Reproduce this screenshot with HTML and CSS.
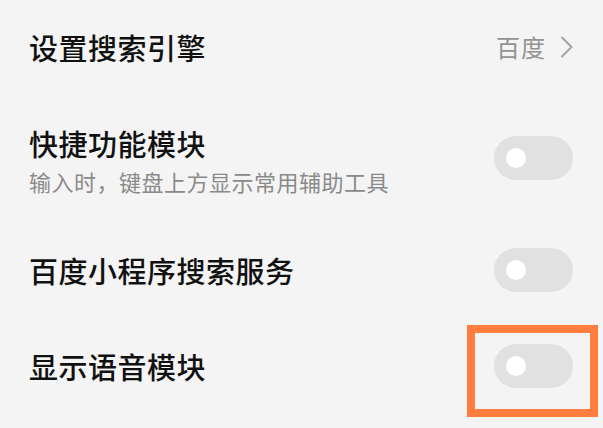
FILE: index.html
```html
<!DOCTYPE html>
<html lang="zh-CN">
<head>
<meta charset="utf-8">
<title>设置</title>
<link rel="stylesheet" href="styles.css">
</head>
<body>
<div class="page">
  <div class="row row-first">
    <div class="title">设置搜索引擎</div>
    <div class="value">
      <span class="value-text">百度</span>
      <svg class="chevron" width="14" height="22" viewBox="0 0 14 22"><path d="M2 1.5 L11.5 11 L2 20.5" fill="none" stroke="#a3a3a3" stroke-width="2" stroke-linecap="round" stroke-linejoin="round"/></svg>
    </div>
  </div>
  <div class="row row-tall">
    <div class="text">
      <div class="title">快捷功能模块</div>
      <div class="sub">输入时，键盘上方显示常用辅助工具</div>
    </div>
    <div class="toggle"><span class="knob"></span></div>
  </div>
  <div class="row">
    <div class="title">百度小程序搜索服务</div>
    <div class="toggle"><span class="knob"></span></div>
  </div>
  <div class="row row-last">
    <div class="title">显示语音模块</div>
    <div class="toggle"><span class="knob"></span></div>
    <div class="highlight"></div>
  </div>
</div>
</body>
</html>
```

FILE: styles.css
```css
html, body {
  margin: 0;
  padding: 0;
}
body {
  width: 603px;
  height: 428px;
  overflow: hidden;
  background: #f4f4f4;
  font-family: "Noto Sans CJK SC", "Noto Sans", sans-serif;
  color: #111111;
}
.page {
  display: flex;
  flex-direction: column;
}
.row {
  position: relative;
  display: flex;
  align-items: center;
  justify-content: space-between;
  height: 96px;
  padding: 0 30px 0 29px;
  box-sizing: border-box;
}
.row-first {
  height: 94px;
}
.row-tall {
  height: 128px;
}
.row-last {
  height: 95px;
}
.title {
  font-size: 29px;
  line-height: 36px;
  font-weight: 500;
  letter-spacing: 0.5px;
}
.text {
  display: flex;
  flex-direction: column;
  gap: 5px;
  padding-top: 4px;
}
.sub {
  font-size: 22px;
  line-height: 30px;
  color: #8a8a8a;
  letter-spacing: 0.5px;
}
.value {
  display: flex;
  align-items: center;
  gap: 14px;
  margin-right: -1px;
}
.value-text {
  font-size: 24px;
  line-height: 32px;
  color: #929292;
  letter-spacing: 1px;
}
.chevron {
  display: block;
}
.toggle {
  position: relative;
  width: 79px;
  height: 44px;
  border-radius: 22px;
  background: #e1e1e1;
  display: flex;
  align-items: center;
  padding-left: 12px;
  box-sizing: border-box;
}
.knob {
  width: 20px;
  height: 20px;
  border-radius: 50%;
  background: #ffffff;
}
.highlight {
  position: absolute;
  left: 467px;
  top: 7px;
  width: 131px;
  height: 92px;
  border: 8px solid #ff7e3f;
  box-sizing: border-box;
}
```
